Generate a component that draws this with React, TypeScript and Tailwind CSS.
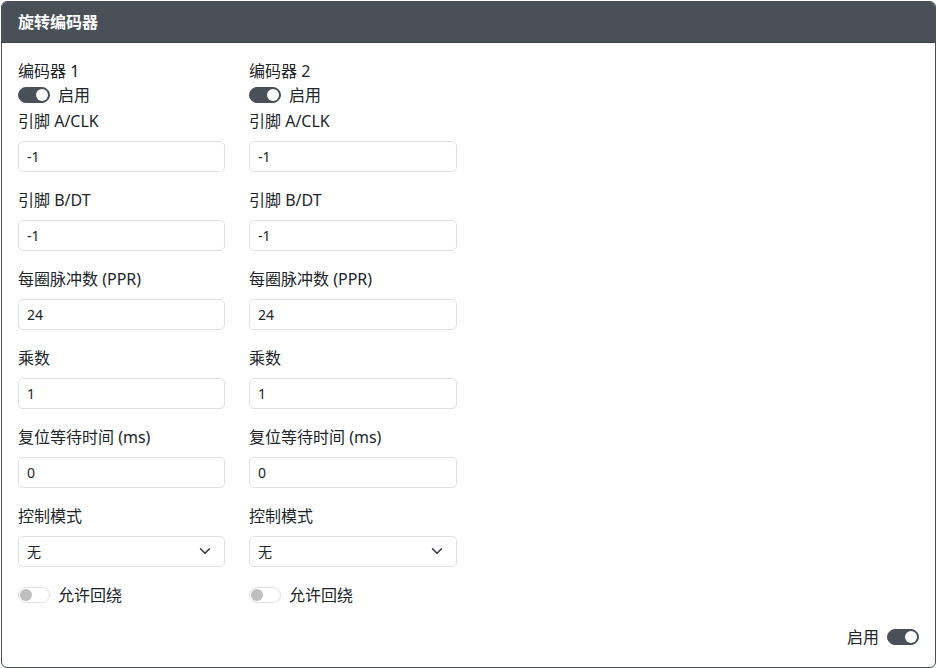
import { ChangeEvent, useState } from 'react';

const FONT = { fontFamily: '"Noto Sans", "Noto Sans CJK SC", sans-serif' };

interface EncoderState {
  enabled: boolean;
  pinA: string;
  pinB: string;
  ppr: string;
  multiplier: string;
  resetTime: string;
  mode: string;
  wrap: boolean;
}

const DEFAULT_ENCODER: EncoderState = {
  enabled: true,
  pinA: '-1',
  pinB: '-1',
  ppr: '24',
  multiplier: '1',
  resetTime: '0',
  mode: 'none',
  wrap: false,
};

function Switch({ checked, onChange }: { checked: boolean; onChange: () => void }) {
  return (
    <button
      type="button"
      onClick={onChange}
      className={`relative h-4 w-8 shrink-0 rounded-full border ${
        checked ? 'border-[#495057] bg-[#495057]' : 'border-[#dee2e6] bg-white'
      }`}
    >
      <span
        className={`absolute top-[1px] h-3 w-3 rounded-full ${
          checked ? 'left-[17px] bg-white' : 'left-[1px] bg-[#bfbfbf]'
        }`}
      />
    </button>
  );
}

function Field({
  label,
  value,
  onChange,
}: {
  label: string;
  value: string;
  onChange: (e: ChangeEvent<HTMLInputElement>) => void;
}) {
  return (
    <div className="mb-4">
      <label className="mb-2 block text-base leading-6 text-[#212529]">{label}</label>
      <input
        value={value}
        onChange={onChange}
        className="block h-[31px] w-full rounded-[5px] border border-[#dee2e6] bg-white px-2 text-sm text-[#212529] outline-none"
      />
    </div>
  );
}

function EncoderColumn({ index, className }: { index: number; className: string }) {
  const [enc, setEnc] = useState<EncoderState>(DEFAULT_ENCODER);
  const set = (key: keyof EncoderState) => (e: ChangeEvent<HTMLInputElement | HTMLSelectElement>) =>
    setEnc({ ...enc, [key]: e.target.value });

  return (
    <div className={`shrink-0 ${className}`}>
      <div className="text-base leading-6 text-[#212529]">编码器 {index}</div>
      <div className="mb-[2px] flex h-6 items-center gap-2">
        <Switch checked={enc.enabled} onChange={() => setEnc({ ...enc, enabled: !enc.enabled })} />
        <span className="text-base leading-6 text-[#212529]">启用</span>
      </div>
      <Field label="引脚 A/CLK" value={enc.pinA} onChange={set('pinA')} />
      <Field label="引脚 B/DT" value={enc.pinB} onChange={set('pinB')} />
      <Field label="每圈脉冲数 (PPR)" value={enc.ppr} onChange={set('ppr')} />
      <Field label="乘数" value={enc.multiplier} onChange={set('multiplier')} />
      <Field label="复位等待时间 (ms)" value={enc.resetTime} onChange={set('resetTime')} />
      <div className="mb-4">
        <label className="mb-2 block text-base leading-6 text-[#212529]">控制模式</label>
        <div className="relative">
          <select
            value={enc.mode}
            onChange={set('mode')}
            className="block h-[31px] w-full appearance-none rounded-[5px] border border-[#dee2e6] bg-white px-2 text-sm text-[#212529] outline-none"
          >
            <option value="none">无</option>
            <option value="axis">轴</option>
            <option value="button">按钮</option>
          </select>
          <svg
            viewBox="0 0 16 16"
            className="pointer-events-none absolute right-[12px] top-[9px] h-3 w-4"
            fill="none"
            stroke="#343a40"
            strokeWidth="2"
            strokeLinecap="round"
            strokeLinejoin="round"
          >
            <path d="m2 5 6 6 6-6" />
          </svg>
        </div>
      </div>
      <div className="flex h-6 items-center gap-2">
        <Switch checked={enc.wrap} onChange={() => setEnc({ ...enc, wrap: !enc.wrap })} />
        <span className="text-base leading-6 text-[#212529]">允许回绕</span>
      </div>
    </div>
  );
}

export default function App() {
  const [enabled, setEnabled] = useState(true);

  return (
    <div className="bg-white p-[1px]" style={FONT}>
      <div className="overflow-hidden rounded-[6px] border border-[#495057] bg-white">
        <div className="border-b border-[#3d434a] bg-[#495057] px-4 py-2">
          <h2 className="text-base font-bold leading-6 text-white">旋转编码器</h2>
        </div>
        <div className="px-4 pb-[18px] pt-4">
          <div className="flex gap-6">
            <EncoderColumn index={1} className="w-[207px]" />
            <EncoderColumn index={2} className="w-[208px]" />
          </div>
          <div className="mt-[18px] flex h-6 items-center justify-end gap-2">
            <span className="text-base leading-6 text-[#212529]">启用</span>
            <Switch checked={enabled} onChange={() => setEnabled(!enabled)} />
          </div>
        </div>
      </div>
    </div>
  );
}
